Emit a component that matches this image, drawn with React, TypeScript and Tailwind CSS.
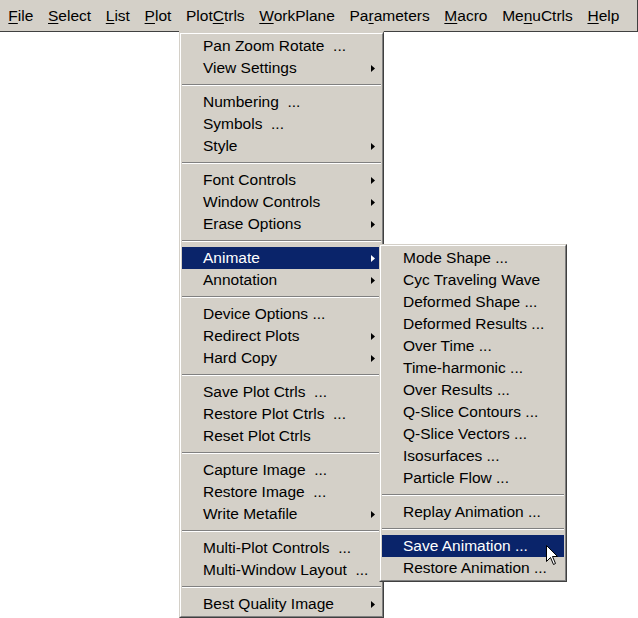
import React from "react";

type Item =
  | { sep: true }
  | { sep?: false; label: string; sub?: boolean; active?: boolean };

const mainItems: Item[] = [
  { label: "Pan Zoom Rotate  ..." },
  { label: "View Settings", sub: true },
  { sep: true },
  { label: "Numbering  ..." },
  { label: "Symbols  ..." },
  { label: "Style", sub: true },
  { sep: true },
  { label: "Font Controls", sub: true },
  { label: "Window Controls", sub: true },
  { label: "Erase Options", sub: true },
  { sep: true },
  { label: "Animate", sub: true, active: true },
  { label: "Annotation", sub: true },
  { sep: true },
  { label: "Device Options ..." },
  { label: "Redirect Plots", sub: true },
  { label: "Hard Copy", sub: true },
  { sep: true },
  { label: "Save Plot Ctrls  ..." },
  { label: "Restore Plot Ctrls  ..." },
  { label: "Reset Plot Ctrls" },
  { sep: true },
  { label: "Capture Image  ..." },
  { label: "Restore Image  ..." },
  { label: "Write Metafile", sub: true },
  { sep: true },
  { label: "Multi-Plot Controls  ..." },
  { label: "Multi-Window Layout  ..." },
  { sep: true },
  { label: "Best Quality Image", sub: true },
];

const subItems: Item[] = [
  { label: "Mode Shape ..." },
  { label: "Cyc Traveling Wave" },
  { label: "Deformed Shape ..." },
  { label: "Deformed Results ..." },
  { label: "Over Time ..." },
  { label: "Time-harmonic ..." },
  { label: "Over Results ..." },
  { label: "Q-Slice Contours ..." },
  { label: "Q-Slice Vectors ..." },
  { label: "Isosurfaces ..." },
  { label: "Particle Flow ..." },
  { sep: true },
  { label: "Replay Animation ..." },
  { sep: true },
  { label: "Save Animation ...", active: true },
  { label: "Restore Animation ..." },
];

function Arrow({ white }: { white?: boolean }) {
  return (
    <svg width="4" height="7" viewBox="0 0 4 7" className="block">
      <path d="M0 0 L4 3.5 L0 7 Z" fill={white ? "#ffffff" : "#000000"} />
    </svg>
  );
}

function Separator() {
  return (
    <div className="h-[12px] flex flex-col justify-center">
      <div className="h-px bg-[#808080]" />
      <div className="h-px bg-white" />
    </div>
  );
}

function Row({
  item,
  children,
}: {
  item: { label: string; sub?: boolean; active?: boolean };
  children?: React.ReactNode;
}) {
  return (
    <div
      className={
        "relative h-[22px] flex items-center pl-[21px] pr-[6px] " +
        (item.active ? "bg-[#0a246a] text-white" : "text-black")
      }
    >
      <span className="flex-1 whitespace-pre leading-none">{item.label}</span>
      {item.sub && <Arrow white={item.active} />}
      {children}
    </div>
  );
}

function MenuBox({
  items,
  className,
  renderExtra,
}: {
  items: Item[];
  className: string;
  renderExtra?: (label: string) => React.ReactNode;
}) {
  return (
    <div
      className={
        "bg-[#d4d0c8] border-l border-t border-r border-b border-l-[#d4d0c8] border-t-[#d4d0c8] border-r-[#404040] border-b-[#404040] " +
        className
      }
    >
      <div className="border border-l-white border-t-white border-r-[#808080] border-b-[#808080] p-px">
        {items.map((it, i) =>
          it.sep ? (
            <Separator key={i} />
          ) : (
            <Row key={i} item={it}>
              {renderExtra ? renderExtra(it.label) : null}
            </Row>
          )
        )}
      </div>
    </div>
  );
}

const barItems: { pre: string; u: string; post: string }[] = [
  { pre: "", u: "F", post: "ile" },
  { pre: "", u: "S", post: "elect" },
  { pre: "", u: "L", post: "ist" },
  { pre: "", u: "P", post: "lot" },
  { pre: "Plot", u: "C", post: "trls" },
  { pre: "", u: "W", post: "orkPlane" },
  { pre: "Pa", u: "r", post: "ameters" },
  { pre: "", u: "M", post: "acro" },
  { pre: "Me", u: "n", post: "uCtrls" },
  { pre: "", u: "H", post: "elp" },
];

export default function App() {
  return (
    <div
      className="relative w-[638px] h-[618px] bg-white overflow-hidden text-[15.5px] text-black"
      style={{ fontFamily: '"Liberation Sans", Arial, sans-serif' }}
    >
      <div className="h-[32px] bg-[#d4d0c8] border-b border-r border-[#404040] flex items-center pl-px">
        {barItems.map((b, i) => (
          <div key={i} className="px-[7.35px] leading-none whitespace-pre">
            {b.pre}
            <span className="underline underline-offset-[2px] decoration-1">{b.u}</span>
            {b.post}
          </div>
        ))}
      </div>

      <MenuBox
        items={mainItems}
        className="absolute left-[179px] top-[31px] w-[205px] border-t-2"
        renderExtra={(label) =>
          label === "Animate" ? (
            <MenuBox
              items={subItems}
              className="absolute left-[197px] top-[-3px] w-[188px] text-black"
            />
          ) : null
        }
      />

      <svg
        className="absolute left-[546px] top-[545px]"
        width="13"
        height="21"
        viewBox="0 0 13 21"
      >
        <path
          d="M0.5 0.5 L0.5 16.5 L4.5 12.5 L7.5 19.5 L9.5 18.5 L6.5 11.5 L11.5 11.5 Z"
          fill="#ffffff"
          stroke="#000000"
          strokeWidth="1"
          strokeLinejoin="miter"
        />
      </svg>
    </div>
  );
}
